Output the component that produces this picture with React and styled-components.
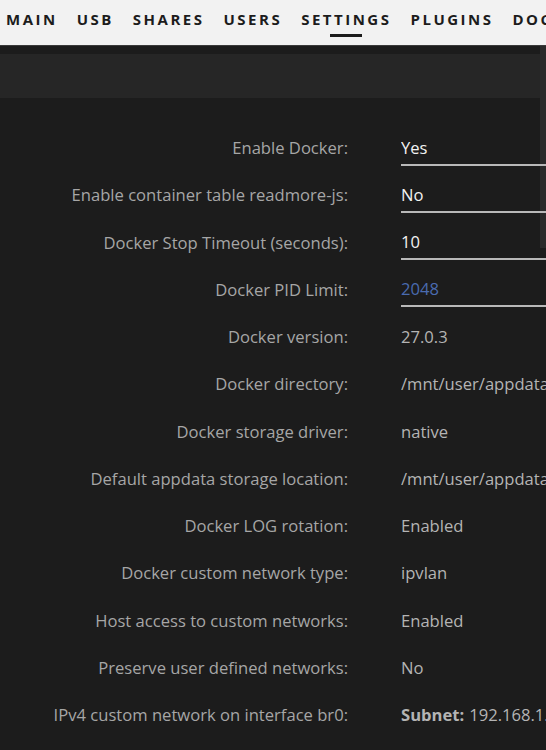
import React from 'react'
import styled, { createGlobalStyle } from 'styled-components'

const GlobalStyle = createGlobalStyle`
	html, body {
		margin: 0;
		padding: 0;
		background: #1c1c1c;
		overflow: hidden;
	}
	body {
		font-family: 'Open Sans', 'Noto Sans', sans-serif;
	}
`

const Page = styled.div`
	position: relative;
	width: 546px;
	height: 750px;
	overflow: hidden;
	background: #1c1c1c;
`

const NavBar = styled.nav`
	display: flex;
	gap: 19px;
	height: 45px;
	padding-left: 6px;
	background: #f2f2f2;
	border-bottom: 1px solid #3a3a3a;
	white-space: nowrap;
`

const NavItem = styled.a`
	position: relative;
	display: flex;
	align-items: center;
	height: 38px;
	font-size: 15px;
	font-weight: 700;
	letter-spacing: 2.5px;
	color: #1c1c1c;
	text-decoration: none;

	${(p) =>
		p.$active &&
		`
		&::after {
			content: '';
			position: absolute;
			left: 50%;
			bottom: 1px;
			width: 32px;
			height: 3px;
			margin-left: -16px;
			background: #1c1c1c;
		}
	`}
`

const TitleBar = styled.div`
	height: 44px;
	margin-top: 8px;
	background: #262626;
`

const Settings = styled.div`
	position: relative;
	display: grid;
	grid-template-columns: 348px 1fr;
	grid-auto-rows: 47.25px;
	column-gap: 53px;
	padding-top: 26px;
	font-size: 16.6px;
`

const Label = styled.div`
	display: flex;
	align-items: center;
	justify-content: flex-end;
	color: #a6a6a6;
	white-space: nowrap;
`

const Value = styled.div`
	display: flex;
	align-items: center;
	color: #b4b4b4;
	white-space: nowrap;
	overflow: hidden;
`

const Field = styled.div`
	box-sizing: border-box;
	display: flex;
	align-items: center;
	flex: none;
	width: 300px;
	height: 35px;
	margin-top: 1px;
	border-bottom: 2px solid #b8b8b8;
	color: ${(p) => (p.$link ? '#4a6bb0' : '#f2f2f2')};
`

const Strong = styled.b`
	font-weight: 700;
	margin-right: 5px;
`

const ScrollThumb = styled.div`
	position: absolute;
	top: 46px;
	right: 0;
	width: 6px;
	height: 202px;
	background: #2a2a2a;
`

const tabs = ['MAIN', 'USB', 'SHARES', 'USERS', 'SETTINGS', 'PLUGINS', 'DOCKER']

const rows = [
	{ label: 'Enable Docker:', value: 'Yes', field: true },
	{ label: 'Enable container table readmore-js:', value: 'No', field: true },
	{ label: 'Docker Stop Timeout (seconds):', value: '10', field: true },
	{ label: 'Docker PID Limit:', value: '2048', field: true, link: true },
	{ label: 'Docker version:', value: '27.0.3' },
	{ label: 'Docker directory:', value: '/mnt/user/appdata/docker' },
	{ label: 'Docker storage driver:', value: 'native' },
	{ label: 'Default appdata storage location:', value: '/mnt/user/appdata/' },
	{ label: 'Docker LOG rotation:', value: 'Enabled' },
	{ label: 'Docker custom network type:', value: 'ipvlan' },
	{ label: 'Host access to custom networks:', value: 'Enabled' },
	{ label: 'Preserve user defined networks:', value: 'No' },
	{ label: 'IPv4 custom network on interface br0:', value: '192.168.1.0/24', strong: 'Subnet:' },
]

export default function App() {
	return (
		<Page>
			<GlobalStyle />
			<NavBar>
				{tabs.map((t) => (
					<NavItem key={t} $active={t === 'SETTINGS'}>
						{t}
					</NavItem>
				))}
			</NavBar>
			<ScrollThumb />
			<TitleBar />
			<Settings>
				{rows.map((r) => (
					<React.Fragment key={r.label}>
						<Label>{r.label}</Label>
						<Value>
							{r.field ? (
								<Field $link={r.link}>{r.value}</Field>
							) : (
								<>
									{r.strong && <Strong>{r.strong}</Strong>}
									{r.value}
								</>
							)}
						</Value>
					</React.Fragment>
				))}
			</Settings>
		</Page>
	)
}
